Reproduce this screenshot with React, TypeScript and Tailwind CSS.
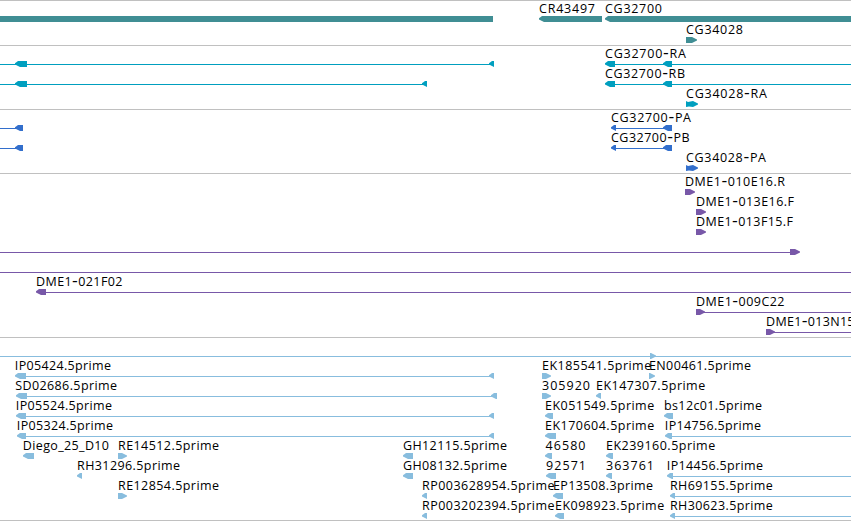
type Dir = "l" | "r" | "bar" | "rr";
type Glyph = [Dir, number, number];
type Label = [string, number, number];
type Row = { y: number; line?: [number, number]; glyphs?: Glyph[]; labels?: Label[] };
type Track = { name: string; height: string; color: string; rows: Row[] };

// Row y is the top edge of its glyphs, measured from the top border of the track.
const tracks: Track[] = [
  {
    name: "Gene",
    height: "h-[45px]",
    color: "text-[#408e94]",
    rows: [
      {
        y: 16,
        glyphs: [["bar", 0, 493], ["l", 539, 602], ["l", 605, 852]],
        labels: [["CR43497", 539, 56], ["CG32700", 605, 57]],
      },
      { y: 37, glyphs: [["r", 686, 697]], labels: [["CG34028", 686, 57]] },
    ],
  },
  {
    name: "Transcript",
    height: "h-16",
    color: "text-[#009fbf]",
    rows: [
      { y: 16, line: [0, 490], glyphs: [["l", 15, 27], ["l", 489, 494]] },
      { y: 36, line: [0, 423], glyphs: [["l", 15, 27], ["l", 422, 427]] },
      { y: 16, line: [608, 851], glyphs: [["l", 605, 615], ["l", 663, 672]], labels: [["CG32700-RA", 605, 81]] },
      { y: 36, line: [608, 851], glyphs: [["l", 605, 615], ["l", 663, 672]], labels: [["CG32700-RB", 605, 80]] },
      { y: 56, glyphs: [["rr", 686, 698]], labels: [["CG34028-RA", 686, 81]] },
    ],
  },
  {
    name: "CDS",
    height: "h-16",
    color: "text-[#336fcc]",
    rows: [
      { y: 16, line: [0, 17], glyphs: [["l", 15, 23]] },
      { y: 36, line: [0, 17], glyphs: [["l", 15, 23]] },
      { y: 16, line: [613, 670], glyphs: [["l", 611, 616], ["l", 663, 672]], labels: [["CG32700-PA", 611, 80]] },
      { y: 36, line: [613, 670], glyphs: [["l", 611, 616], ["l", 663, 672]], labels: [["CG32700-PB", 611, 78.5]] },
      { y: 56, glyphs: [["rr", 686, 698]], labels: [["CG34028-PA", 686, 80]] },
    ],
  },
  {
    name: "BAC",
    height: "h-41",
    color: "text-[#7858a8]",
    rows: [
      { y: 16, glyphs: [["r", 685, 695]], labels: [["DME1-010E16.R", 685, 100]] },
      { y: 36, glyphs: [["r", 696, 706]], labels: [["DME1-013E16.F", 696, 98]] },
      { y: 56, glyphs: [["r", 696, 706]], labels: [["DME1-013F15.F", 696, 97]] },
      { y: 76, line: [0, 792], glyphs: [["r", 790, 800]] },
      { y: 96, line: [0, 851] },
      { y: 116, line: [40, 851], glyphs: [["l", 36, 46]], labels: [["DME1-021F02", 36, 86.5]] },
      { y: 136, line: [698, 851], glyphs: [["r", 696, 705]], labels: [["DME1-009C22", 696, 88.5]] },
      { y: 156, line: [768, 851], glyphs: [["r", 766, 775]], labels: [["DME1-013N15", 766, 88.5]] },
    ],
  },
  {
    name: "EST",
    height: "h-[183px]",
    color: "text-[#88bdde]",
    rows: [
      { y: 16, line: [0, 851], glyphs: [["r", 650, 656]] },
      { y: 36, line: [18, 490], glyphs: [["l", 15, 26], ["l", 489, 494]], labels: [["IP05424.5prime", 14.8, 96.2]] },
      { y: 56, line: [19, 493], glyphs: [["l", 16, 27], ["l", 491, 497]], labels: [["SD02686.5prime", 15.2, 101.8]] },
      { y: 76, line: [19, 490], glyphs: [["l", 16, 26], ["l", 489, 494]], labels: [["IP05524.5prime", 15.8, 96.2]] },
      { y: 96, line: [20, 490], glyphs: [["l", 17, 26], ["l", 489, 494]], labels: [["IP05324.5prime", 16.8, 96.2]] },
      {
        y: 116,
        glyphs: [["l", 23, 34], ["r", 118, 127], ["l", 403, 413]],
        labels: [["Diego_25_D10", 22.8, 86.2], ["RE14512.5prime", 118, 101], ["GH12115.5prime", 403, 104]],
      },
      {
        y: 136,
        glyphs: [["l", 77, 82], ["l", 403, 413]],
        labels: [["RH31296.5prime", 77, 103], ["GH08132.5prime", 403, 104]],
      },
      {
        y: 156,
        glyphs: [["r", 118, 127], ["l", 422, 427]],
        labels: [["RE12854.5prime", 118, 101], ["RP003628954.5prime", 422, 132.5]],
      },
      { y: 176, glyphs: [["l", 422, 427]], labels: [["RP003202394.5prime", 422, 132.5]] },
      {
        y: 36,
        glyphs: [["r", 542, 551], ["r", 649, 655]],
        labels: [["EK185541.5prime", 542, 109.2], ["EN00461.5prime", 649, 102]],
      },
      {
        y: 56,
        glyphs: [["r", 542, 551], ["l", 596, 601]],
        labels: [["305920", 542, 48], ["EK147307.5prime", 596, 109.2]],
      },
      {
        y: 76,
        glyphs: [["l", 545, 553], ["l", 664, 673]],
        labels: [["EK051549.5prime", 545, 109.2], ["bs12c01.5prime", 664, 98]],
      },
      {
        y: 96,
        line: [667, 851],
        glyphs: [["l", 665, 672]],
        labels: [["EK170604.5prime", 545, 109.2], ["IP14756.5prime", 664.8, 96.2]],
      },
      { y: 96, glyphs: [["l", 545, 556]] },
      {
        y: 116,
        glyphs: [["l", 545, 552], ["l", 606, 613]],
        labels: [["46580", 545.5, 40], ["EK239160.5prime", 606, 109.2]],
      },
      {
        y: 136,
        line: [669, 851],
        glyphs: [["l", 546, 556], ["l", 606, 612], ["l", 667, 673]],
        labels: [["92571", 546, 40], ["363761", 606, 48], ["IP14456.5prime", 666.8, 96.2]],
      },
      {
        y: 156,
        line: [672, 851],
        glyphs: [["l", 553, 563], ["l", 670, 675]],
        labels: [["EP13508.3prime", 553, 100], ["RH69155.5prime", 670, 102.8]],
      },
      {
        y: 176,
        line: [672, 851],
        glyphs: [["l", 555, 564], ["l", 670, 675]],
        labels: [["EK098923.5prime", 555, 109.2], ["RH30623.5prime", 670, 102.8]],
      },
    ],
  },
];

function glyphPoints([dir, a, b]: Glyph, y: number): string {
  if (dir === "bar") return `${a},${y} ${b},${y} ${b},${y + 6} ${a},${y + 6}`;
  if (dir === "l") {
    const head = Math.min(5, b - a);
    return `${a},${y + 2.2} ${a + 3},${y} ${b},${y} ${b},${y + 6} ${a + head},${y + 6} ${a},${y + 3.6}`;
  }
  if (dir === "rr") {
    return `${a},${y} ${a + 2},${y + 1} ${a + 7},${y} ${b},${y + 2.4} ${b},${y + 3.6} ${a + 7},${y + 6} ${a + 3},${y + 5.4} ${a},${y + 6}`;
  }
  const head = Math.min(5, b - a);
  return `${a},${y} ${b - head},${y} ${b},${y + 2.4} ${b},${y + 3.6} ${b - head},${y + 6} ${a},${y + 6}`;
}

function LabelText({ label: [text, x, width], y }: { label: Label; y: number }) {
  const [name, suffix] = text.split("-");
  return (
    <text x={x} y={y} textLength={width} className="fill-black">
      {name}
      {suffix && <tspan className="font-['DejaVu_Sans'] text-[16px]">-</tspan>}
      {suffix}
    </text>
  );
}

function TrackPanel({ track }: { track: Track }) {
  return (
    <section aria-label={track.name} className={`w-full border-t border-[#c0c0c0] ${track.height} ${track.color}`}>
      <svg className="block h-full w-full overflow-visible" fill="currentColor">
        {track.rows.map((row, i) => (
          <g key={i} transform="translate(0 -1)">
            {row.line && <rect x={row.line[0]} y={row.y + 3} width={row.line[1] - row.line[0]} height={1} />}
            {row.glyphs?.map((g) => (
              <polygon key={g.join()} points={glyphPoints(g, row.y)} />
            ))}
            {row.labels?.map((label) => (
              <LabelText key={label[0]} label={label} y={row.y - 3} />
            ))}
          </g>
        ))}
      </svg>
    </section>
  );
}

export default function App() {
  return (
    <main className="flex h-[521px] w-[851px] flex-col overflow-hidden border-b border-[#c0c0c0] bg-white font-['Open_Sans',sans-serif] text-[12.5px]">
      {tracks.map((track) => (
        <TrackPanel key={track.name} track={track} />
      ))}
    </main>
  );
}
